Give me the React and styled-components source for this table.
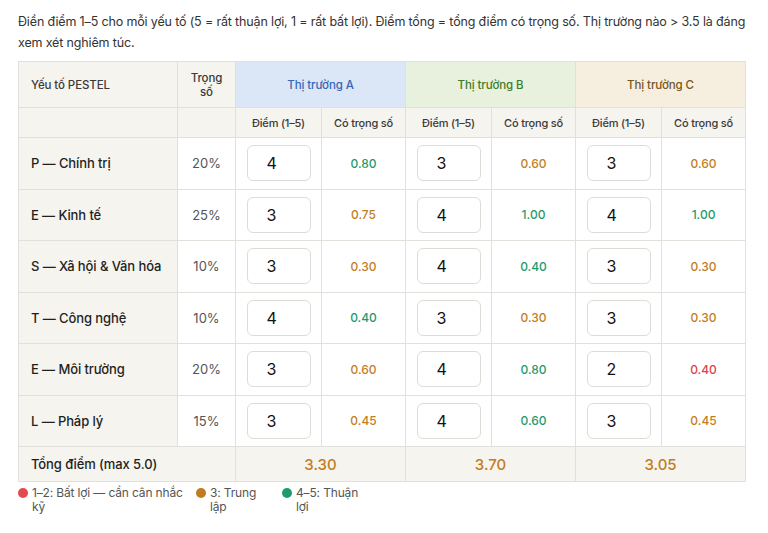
import React, { useState } from 'react'
import styled, { createGlobalStyle } from 'styled-components'

const GlobalStyle = createGlobalStyle`
  body {
    margin: 0;
    background: #ffffff;
    font-family: Inter, "Noto Sans", sans-serif;
    color: #333;
  }
`

const factors = [
  { key: 'P', name: 'Chính trị', weight: 20 },
  { key: 'E', name: 'Kinh tế', weight: 25 },
  { key: 'S', name: 'Xã hội & Văn hóa', weight: 10 },
  { key: 'T', name: 'Công nghệ', weight: 10 },
  { key: 'E', name: 'Môi trường', weight: 20 },
  { key: 'L', name: 'Pháp lý', weight: 15 },
]

const markets = [
  { id: 'A', tone: 'blue', scores: [4, 3, 3, 4, 3, 3] },
  { id: 'B', tone: 'green', scores: [3, 4, 4, 3, 4, 4] },
  { id: 'C', tone: 'tan', scores: [3, 4, 3, 3, 2, 3] },
]

const tones = {
  blue: { bg: '#dbe6f6', fg: '#3567b8' },
  green: { bg: '#e7f1dd', fg: '#3f7b2b' },
  tan: { bg: '#f6eedf', fg: '#74561c' },
}

const scoreColor = (s) => (s >= 4 ? '#1f9a6c' : s === 3 ? '#c37d1e' : '#dc4448')

const Page = styled.div`
  padding: 11px 18px 0 18px;
`

const Intro = styled.p`
  margin: 0 0 8px 0;
  width: 732px;
  font-size: 12.5px;
  letter-spacing: -0.15px;
  line-height: 21px;
  color: #333;
`

const Table = styled.table`
  border-collapse: collapse;
  table-layout: fixed;
  width: 727px;
  font-size: 13px;
  border: 1px solid #e2e0da;
`

const HeadCell = styled.th`
  border: 1px solid #e2e0da;
  background: ${(p) => (p.$tone ? tones[p.$tone].bg : '#f5f4ef')};
  color: ${(p) => (p.$tone ? tones[p.$tone].fg : '#3a3a3a')};
  font-weight: 500;
  font-size: ${(p) => (p.$small ? '11px' : '11.5px')};
  letter-spacing: ${(p) => (p.$small ? '-0.2px' : '-0.1px')};
  text-align: ${(p) => (p.$left ? 'left' : 'center')};
  padding: ${(p) => (p.$left ? '0 12px' : p.$narrow ? '0 10px' : '0 4px')};
  height: ${(p) => (p.$small ? '29px' : '45px')};
  line-height: 14px;
  vertical-align: middle;
`

const LabelCell = styled.td`
  border: 1px solid #e2e0da;
  background: #f5f4ef;
  padding: 0 12px;
  font-weight: 500;
  letter-spacing: -0.1px;
  color: #1f1f1f;
  height: 50.5px;
`

const Cell = styled.td`
  border: 1px solid #e2e0da;
  text-align: center;
  color: #555;
  background: #fff;
`

const Weighted = styled(Cell)`
  font-size: 12px;
  font-weight: 500;
  color: ${(p) => p.$color};
`

const ScoreInput = styled.input`
  box-sizing: border-box;
  width: 64px;
  height: 36px;
  border: 1px solid #dedcd6;
  border-radius: 6px;
  background: #fff;
  font-family: Inter, "Noto Sans", sans-serif;
  font-size: 16px;
  color: #111;
  padding: 0 0 0 19px;
  outline: none;
`

const TotalRow = styled.tr`
  td {
    background: #f5f4ef;
    border: 1px solid #e2e0da;
    height: 32px;
  }
`

const TotalLabel = styled.td`
  padding: 0 12px;
  font-weight: 500;
  letter-spacing: -0.1px;
  color: #1f1f1f;
`

const TotalValue = styled.td`
  text-align: center;
  font-size: 15px;
  font-weight: 500;
  color: #c37d1e;
`

const Legend = styled.div`
  display: flex;
  align-items: flex-start;
  padding-top: 4px;
`

const LegendItem = styled.div`
  display: flex;
  align-items: flex-start;
  gap: 4px;
  width: ${(p) => p.$w}px;
  font-size: 12px;
  letter-spacing: -0.15px;
  line-height: 14px;
  color: #555;
`

const LegendText = styled.span`
  width: ${(p) => p.$w}px;
`

const Dot = styled.span`
  flex: none;
  width: 10px;
  height: 10px;
  border-radius: 50%;
  margin-top: 2px;
  background: ${(p) => p.$c};
`

export default function App() {
  const [data, setData] = useState(markets)

  const update = (mi, fi, v) => {
    const n = Math.max(1, Math.min(5, parseInt(v, 10) || 1))
    setData((d) =>
      d.map((m, i) =>
        i === mi ? { ...m, scores: m.scores.map((s, j) => (j === fi ? n : s)) } : m
      )
    )
  }

  const total = (m) =>
    m.scores.reduce((sum, s, i) => sum + (s * factors[i].weight) / 100, 0).toFixed(2)

  return (
    <>
      <GlobalStyle />
      <Page>
        <Intro>
          Điền điểm 1–5 cho mỗi yếu tố (5 = rất thuận lợi, 1 = rất bất lợi). Điểm tổng = tổng
          điểm có trọng số. Thị trường nào &gt; 3.5 là đáng xem xét nghiêm túc.
        </Intro>
        <Table>
          <colgroup>
            <col style={{ width: 159 }} />
            <col style={{ width: 58 }} />
            {data.map((m) => (
              <React.Fragment key={m.id}>
                <col style={{ width: 86 }} />
                <col style={{ width: 84 }} />
              </React.Fragment>
            ))}
          </colgroup>
          <thead>
            <tr>
              <HeadCell $left>Yếu tố PESTEL</HeadCell>
              <HeadCell $narrow>Trọng số</HeadCell>
              {data.map((m) => (
                <HeadCell key={m.id} colSpan={2} $tone={m.tone}>
                  Thị trường {m.id}
                </HeadCell>
              ))}
            </tr>
            <tr>
              <HeadCell $small />
              <HeadCell $small />
              {data.map((m) => (
                <React.Fragment key={m.id}>
                  <HeadCell $small>Điểm (1–5)</HeadCell>
                  <HeadCell $small>Có trọng số</HeadCell>
                </React.Fragment>
              ))}
            </tr>
          </thead>
          <tbody>
            {factors.map((f, fi) => (
              <tr key={fi}>
                <LabelCell>
                  {f.key} — {f.name}
                </LabelCell>
                <Cell>{f.weight}%</Cell>
                {data.map((m, mi) => {
                  const s = m.scores[fi]
                  return (
                    <React.Fragment key={m.id}>
                      <Cell>
                        <ScoreInput
                          type="text"
                          value={s}
                          onChange={(e) => update(mi, fi, e.target.value)}
                        />
                      </Cell>
                      <Weighted $color={scoreColor(s)}>
                        {((s * f.weight) / 100).toFixed(2)}
                      </Weighted>
                    </React.Fragment>
                  )
                })}
              </tr>
            ))}
            <TotalRow>
              <TotalLabel colSpan={2}>Tổng điểm (max 5.0)</TotalLabel>
              {data.map((m) => (
                <TotalValue key={m.id} colSpan={2}>
                  {total(m)}
                </TotalValue>
              ))}
            </TotalRow>
          </tbody>
        </Table>
        <Legend>
          <LegendItem $w={178}>
            <Dot $c="#e24a4e" />
            <LegendText $w={152}>1–2: Bất lợi — cần cân nhắc kỹ</LegendText>
          </LegendItem>
          <LegendItem $w={86}>
            <Dot $c="#c17a1c" />
            <LegendText $w={58}>3: Trung lập</LegendText>
          </LegendItem>
          <LegendItem $w={100}>
            <Dot $c="#1f9a6c" />
            <LegendText $w={68}>4–5: Thuận lợi</LegendText>
          </LegendItem>
        </Legend>
      </Page>
    </>
  )
}
